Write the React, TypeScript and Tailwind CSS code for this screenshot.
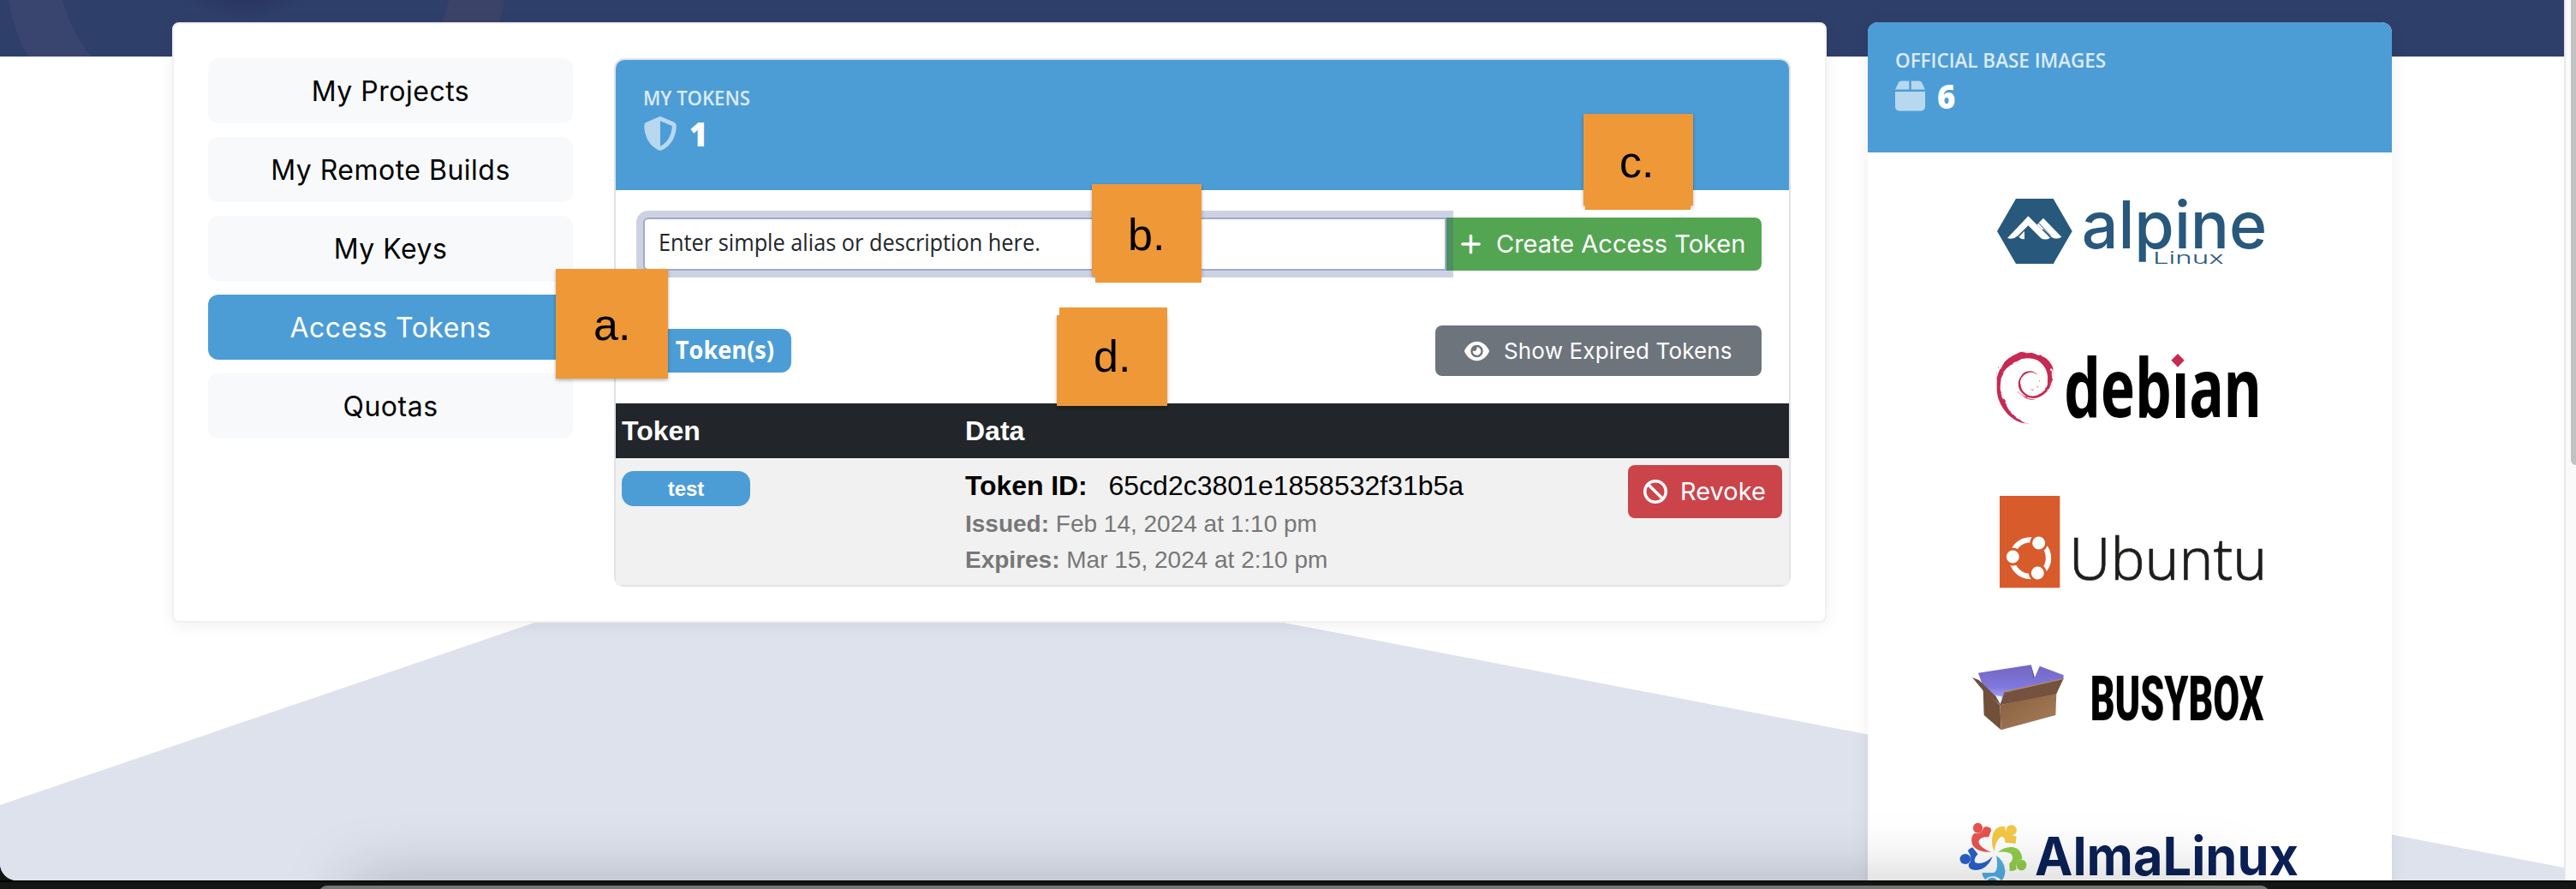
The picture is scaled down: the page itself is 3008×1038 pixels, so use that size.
import type { ReactNode } from "react";
import { FaBan, FaBox, FaEye, FaPlus, FaShieldHalved } from "react-icons/fa6";
import { SiDebian } from "react-icons/si";

const NAV = ["My Projects", "My Remote Builds", "My Keys", "Access Tokens", "Quotas"];

function StatHeader({ title, icon, count, rounded }: { title: ReactNode; icon: ReactNode; count: string; rounded: string }) {
  return (
    <div className={`h-[152px] bg-[#4c9dd6] px-8 pt-[26px] font-['Open_Sans'] text-white ${rounded}`}>
      <div className="h-9 text-2xl leading-9 font-semibold text-white/80">{title}</div>
      <div className="mt-1 flex h-10 items-center">
        <span className="text-white/60">{icon}</span>
        <span className="ml-[14px] inline-block origin-left scale-x-[0.96] text-[38px] leading-10 font-extrabold">{count}</span>
      </div>
    </div>
  );
}

function Note({ label, className, children }: { label: string; className: string; children?: ReactNode }) {
  return (
    <div className={`absolute z-20 bg-[#ef9837] shadow-[0_2px_4px_rgba(0,0,0,0.3)] ${className}`}>
      {children}
      <span className="relative block font-['Liberation_Sans'] text-[52px] leading-[60px] text-black">{label}</span>
    </div>
  );
}

function AlpineLogo() {
  return (
    <svg className="block h-[184px] w-[612px]" viewBox="-297 -66 1836 552" fill="#28587c">
      <path d="M222 96H353L419 210L353 324H222L156 210Z" />
      <g fill="#fff">
        <path d="M265 157L342 233Q326 243 310 235L265 190L229 226Q212 241 192 234Z" />
        <path d="M252 209V238Q240 238 232 230Z" />
        <path d="M318 164L382 230Q364 241 347 231L317 202L315 206L296 187Z" />
      </g>
      <path d="M301 181L344 226" stroke="#28587c" strokeWidth="3" />
      <text x="452" y="270" fontFamily="Inter, sans-serif" fontWeight="500" fontSize="230" textLength="650" lengthAdjust="spacingAndGlyphs">alpine</text>
      <text x="702" y="323" fontFamily="Inter, sans-serif" fontWeight="300" fontSize="56" textLength="248" lengthAdjust="spacingAndGlyphs">Linux</text>
    </svg>
  );
}

function DebianLogo() {
  return (
    <svg className="block h-[184px] w-[612px]" viewBox="-297 486 1836 552">
      <g transform="translate(128 630)">
        <SiDebian size={254} color="#c62a52" />
      </g>
      <text x="390" y="860" fontFamily="'Noto Sans', sans-serif" fontWeight="700" fontSize="286" textLength="692" lengthAdjust="spacingAndGlyphs">debian</text>
      <rect x="762" y="620" width="56" height="74" fill="#fff" />
      <path d="M789 639L812 662L789 686L766 662Z" fill="#c62a52" />
    </svg>
  );
}

function UbuntuLogo() {
  return (
    <svg className="block h-[184px] w-[612px]" viewBox="-297 18 1836 552">
      <rect x="165" y="117" width="211" height="322" fill="#d75b2b" />
      <circle cx="272" cy="335" r="64" fill="none" stroke="#fff" strokeWidth="19" />
      <g fill="#fff" stroke="#d75b2b" strokeWidth="9">
        <circle cx="302" cy="282" r="27" />
        <circle cx="211" cy="330" r="27" />
        <circle cx="298" cy="387" r="27" />
      </g>
      <text x="408" y="411" fill="#1d1d1b" stroke="#1d1d1b" strokeWidth="2" fontFamily="'Noto Sans', sans-serif" fontWeight="300" fontSize="206" textLength="694" lengthAdjust="spacingAndGlyphs">Ubuntu</text>
    </svg>
  );
}

function BusyboxLogo() {
  return (
    <svg className="block h-[184px] w-[612px]" viewBox="-297 570 1836 552">
      <defs>
        <linearGradient id="inside" x1="0" y1="0" x2="0" y2="1">
          <stop offset="0" stopColor="#7266bd" />
          <stop offset="0.6" stopColor="#8078e0" />
          <stop offset="1" stopColor="#b9b6f6" />
        </linearGradient>
        <linearGradient id="front" x1="0" y1="0" x2="1" y2="1">
          <stop offset="0" stopColor="#86603f" />
          <stop offset="1" stopColor="#a97e5b" />
        </linearGradient>
      </defs>
      <path d="M90 737L275 709L287 755L305 713L389 745L388 760L185 806L165 840L110 795Z" fill="url(#inside)" />
      <path d="M275 709L287 752L284 757Z" fill="#4b4196" />
      <path d="M276 709L289 748L304 714Z" fill="#fff" />
      <path d="M145 816L173 819L167 848Z" fill="#eef0ff" />
      <path d="M69 753L92 762L152 820L170 852L108 800Z" fill="#70503c" />
      <path d="M107 796L166 850L170 937L110 885Z" fill="#71503a" />
      <path d="M166 850L364 806L361 885L170 937Z" fill="url(#front)" />
      <path d="M182 804L389 757L364 810L166 850Z" fill="#74523f" />
      <path d="M182 804L389 757" stroke="#b08a6a" strokeWidth="4" />
      <text x="482" y="902" fontFamily="Roboto, sans-serif" fontWeight="900" fontSize="218" textLength="608" lengthAdjust="spacingAndGlyphs">BUSYBOX</text>
    </svg>
  );
}

function AlmaLogo() {
  return (
    <svg className="block h-[124px] w-[612px]" viewBox="2181 914 612 124">
      <g transform="translate(2240 880) scale(0.4898 0.3333)">
        <g fill="#e6544f">
          <ellipse cx="142" cy="260" rx="11.5" ry="18" />
          <path d="M162 255Q174 258 174 268L168 292Q150 290 144 305Q142 325 174 345Q135 345 128 315Q124 290 134 278Q150 285 156 258Z" />
        </g>
        <g fill="#f3c845">
          <ellipse cx="222" cy="268" rx="12.5" ry="18" />
          <path d="M181 342Q172 315 178 280Q186 250 207 256Q205 282 234 290L232 315L207 311Q207 290 198 290Q185 300 181 342Z" />
        </g>
        <g fill="#90cd4b">
          <ellipse cx="246" cy="390" rx="12" ry="19" />
          <path d="M190 345Q205 325 225 327Q246 332 248 368Q230 375 234 405Q228 412 218 411L217 385Q230 370 222 352Q210 340 190 345Z" />
        </g>
        <g fill="#53aee2">
          <ellipse cx="176" cy="452" rx="13" ry="18" />
          <path d="M186 357Q205 375 207 410Q207 432 198 445Q190 428 176 430Q164 432 160 442Q150 424 153 417L180 417Q192 410 186 357Z" />
        </g>
        <g fill="#2961c8">
          <ellipse cx="112" cy="369" rx="13" ry="18" />
          <path d="M177 360Q165 405 138 408Q118 408 120 388Q132 370 118 340Q126 327 130 329L142 352Q130 370 136 382Q155 392 177 360Z" />
        </g>
      </g>
      <text x="2376" y="1022" fill="#0b2156" fontFamily="Inter, sans-serif" fontWeight="700" fontSize="62" textLength="308" lengthAdjust="spacingAndGlyphs">AlmaLinux</text>
    </svg>
  );
}

export default function App() {
  return (
    <div className="relative h-[1038px] w-[3008px] overflow-hidden bg-[#141616]">
      <div className="relative flex h-[1028px] overflow-hidden rounded-bl-[20px] bg-white">
        <div className="relative w-[2994px] shrink-0 overflow-hidden">
          {/* backdrop */}
          <div className="absolute inset-x-0 top-0 h-[66px] bg-[#2e3f6a]">
            <svg className="block h-[66px] w-[700px]" viewBox="0 0 700 66">
              <defs>
                <radialGradient id="glow">
                  <stop offset="0" stopColor="#26305a" stopOpacity="0.9" />
                  <stop offset="1" stopColor="#26305a" stopOpacity="0" />
                </radialGradient>
              </defs>
              <path d="M10 0H73Q82 34 106 66H33Q17 40 10 0Z" fill="#39456f" />
              <path d="M524 0H589Q587 14 582 30H515Q521 14 524 0Z" fill="#3b4368" />
              <ellipse cx="285" cy="-8" rx="72" ry="30" fill="url(#glow)" />
            </svg>
          </div>
          <svg className="absolute top-[600px] left-0 h-[428px] w-[2994px]" viewBox="0 600 2994 428">
            <path d="M0 940L630 725L1060 643L2994 1013V1028H0Z" fill="#dee2ed" />
          </svg>

          <div className="relative flex items-start gap-12 pt-[26px] pl-[201px]">
            <main className="flex h-[701px] w-[1932px] gap-12 rounded-lg border-2 border-[#f0f0f0] bg-white p-10 shadow-[0_4px_20px_rgba(0,0,0,0.06)]">
              <nav className="flex w-[426px] flex-col gap-4">
                {NAV.map((item) => (
                  <a
                    key={item}
                    className={`flex h-[76px] items-center justify-center rounded-xl pt-px font-['Inter'] text-[32px] tracking-[0.5px] ${
                      item === "Access Tokens" ? "bg-[#4c9dd6] text-white" : "bg-[#f8f9fb] text-black"
                    }`}
                  >
                    {item}
                  </a>
                ))}
              </nav>

              <section className="h-[617px] w-[1374px] rounded-xl border-2 border-[#dfe2e8] bg-white">
                <StatHeader
                  title={<span className="inline-block origin-left scale-x-[0.92]">MY TOKENS</span>}
                  icon={<FaShieldHalved className="h-10 w-10" />}
                  count="1"
                  rounded="rounded-t-[10px]"
                />
                <div className="flex h-[94px] pt-8 pr-8 pl-8">
                  <div className="relative z-10 flex w-[938px] items-center rounded-l-md border-2 border-[#9fabcb] bg-white pb-[6px] pl-[16px] shadow-[0_0_0_8px_rgba(63,81,148,0.26)]">
                    <span className="inline-block origin-left scale-x-[0.904] font-['Open_Sans'] text-[28px] whitespace-nowrap text-[#212529]">
                      Enter simple alias or description here.
                    </span>
                  </div>
                  <button className="flex w-[368px] items-center rounded-r-lg bg-[#54a552] pl-[16px] font-['Inter'] text-[29px] whitespace-nowrap text-white">
                    <FaPlus className="mr-[17px] h-7 w-[25px]" />
                    Create Access Token
                  </button>
                </div>
                <div className="mt-16 flex h-[59px] items-center justify-between px-8">
                  <span className="flex h-[51px] w-[173px] items-center justify-end rounded-xl bg-[#4c9dd6] pr-5 pb-1 font-['Open_Sans'] text-[28px] font-bold text-white">
                    <span className="inline-block origin-right scale-x-[0.97] whitespace-nowrap">1 Token(s)</span>
                  </span>
                  <button className="flex h-[59px] w-[381px] items-center rounded-lg bg-[#6d747c] pl-[34px] font-['Inter'] text-[26px] tracking-[0.15px] text-white">
                    <FaEye className="mr-[17px] h-[26px] w-[29px]" />
                    Show Expired Tokens
                  </button>
                </div>
                <div className="mt-8 grid h-16 grid-cols-[401px_1fr] items-center bg-[#22262a] pl-[7px] font-['Liberation_Sans'] text-[32px] font-bold text-white">
                  <span>Token</span>
                  <span>Data</span>
                </div>
                <div className="grid h-[148px] grid-cols-[401px_1fr_180px] items-start bg-[#f1f1f1] pt-2 pr-2 pl-[7px] font-['Liberation_Sans']">
                  <span className="mt-[7px] flex h-[41px] w-[150px] items-center justify-center rounded-[14px] bg-[#4c9dd6] text-2xl font-bold text-white">
                    test
                  </span>
                  <div className="text-[28px] leading-[42px] text-[#777]">
                    <div className="flex gap-[25px] pt-px text-[32px] leading-[47px] text-black">
                      <b className="tracking-[-0.1px]">Token ID:</b>
                      <span>65cd2c3801e1858532f31b5a</span>
                    </div>
                    <div><b>Issued:</b> Feb 14, 2024 at 1:10 pm</div>
                    <div><b>Expires:</b> Mar 15, 2024 at 2:10 pm</div>
                  </div>
                  <button className="flex h-[62px] items-center rounded-lg bg-[#cb444a] pl-[18px] font-['Inter'] text-[29px] text-white">
                    <FaBan className="mr-[15px] h-7 w-7" />
                    Revoke
                  </button>
                </div>
              </section>
            </main>

            <aside className="h-[1012px] w-[612px] shrink-0 rounded-t-xl bg-white shadow-[0_4px_20px_rgba(0,0,0,0.07)]">
              <StatHeader
                title={<span className="inline-block origin-left scale-x-[0.935] whitespace-nowrap">OFFICIAL BASE IMAGES</span>}
                icon={<FaBox className="h-10 w-[35px]" />}
                count="6"
                rounded="rounded-t-xl"
              />
              <AlpineLogo />
              <DebianLogo />
              <UbuntuLogo />
              <BusyboxLogo />
              <AlmaLogo />
            </aside>
          </div>
        </div>
        <div className="flex w-[14px] justify-end border-l-2 border-[#e8e8e8] bg-[#fafafa]">
          <div className="h-[543px] w-[6px] rounded-bl-[6px] bg-[#c1c1c1]" />
        </div>
        {/* shade cast by the window below */}
        <div className="absolute top-[1044px] left-[420px] h-10 w-[2180px] shadow-[0_0_80px_10px_rgba(0,0,0,0.27)]" />
      </div>

      <div className="h-[2px] bg-black" />
      <div className="absolute top-[1034px] left-[372px] h-5 w-[2278px] rounded-t-[10px] bg-[#747673]" />

      {/* step markers */}
      <Note label="a." className="top-[314px] left-[649px] h-[128px] w-[131px] pt-[35px] pl-[44px]" />
      <Note label="b." className="top-[215px] left-[1275px] h-[107px] w-[128px] pt-[29px] pl-[42px]">
        <div className="absolute top-5 right-0 h-[95px] w-[124px] bg-[#ef9837]" />
      </Note>
      <Note label="c." className="top-[133px] left-[1849px] h-[107px] w-[128px] pt-[26px] pl-[42px]">
        <div className="absolute top-5 left-[2px] h-[92px] w-[123px] bg-[#ef9837]" />
      </Note>
      <Note label="d." className="top-[368px] left-[1234px] h-[106px] w-[129px] pt-[18px] pl-[43px]">
        <div className="absolute -top-[9px] right-0 h-[95px] w-[126px] bg-[#ef9837]" />
      </Note>
    </div>
  );
}
